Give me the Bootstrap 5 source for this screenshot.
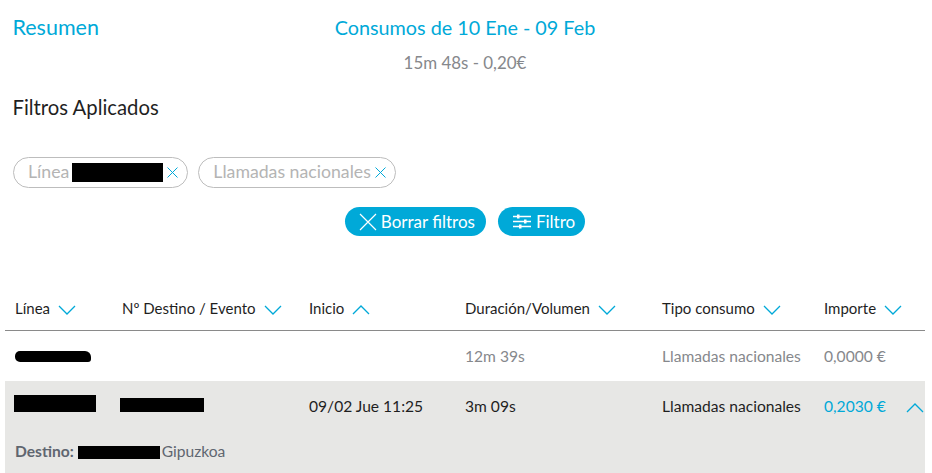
<!DOCTYPE html>
<html lang="es">
<head>
    <meta charset="UTF-8">
    <meta name="viewport" content="width=device-width, initial-scale=1.0">
    <title>Consumos</title>
    <link href="https://cdn.jsdelivr.net/npm/bootstrap@5.3.0/dist/css/bootstrap.min.css" rel="stylesheet">
    <style>
        html, body { height: 473px; overflow: hidden; }
        body { background: #fff; color: #1f1f1f; font-family: Lato, "Noto Sans", sans-serif; font-size: 15px; }
        .page-wrap { padding: 0 7px 0 5px; }
        .top-head { height: 86px; padding: 14px 0 0 7.5px; }
        .resumen-link { flex: 0 0 85.5px; font-size: 21.5px; line-height: 26px; color: #00a9d8; text-decoration: none; }
        .period-box { width: 732px; text-align: center; }
        .period-title { font-size: 19.8px; line-height: 26px; color: #00a9d8; font-weight: 400; }
        .period-sub { font-size: 16.9px; line-height: 20px; margin-top: 13px; color: #86888c; }
        .filters-title { font-size: 20.3px; line-height: 26px; font-weight: 400; margin: 8px 0 0 7.5px; color: #1f1f1f; }
        .chips-row { margin: 37px 0 0 8px; gap: 10px; }
        .filter-chip { height: 31px; border: 1px solid #bdbdbd; border-radius: 16px; color: #b4b4b4; font-size: 17.7px; padding: 0 9px 0 14px; }
        .chip-x { width: 11px; height: 11px; margin-left: 4px; }
        .black-bar { display: inline-block; background: #000; }
        .bar-chip { width: 91px; height: 19px; margin-left: 3px; }
        .actions-row { margin-top: 19px; gap: 12px; }
        .pill-btn { height: 29px; border-radius: 15px; background: #00a9d8; color: #fff; border: 0; font-size: 17px; line-height: 29px; padding: 0 11px 0 14px; display: flex; align-items: center; gap: 4px; }
        .pill-btn:hover { background: #00a9d8; color: #fff; }
        .btn-last { padding: 0 10px 0 15px; gap: 5px; }
        .data-table { table-layout: fixed; width: 920px; margin: 51px 0 0; --bs-table-bg: transparent; }
        .data-table th, .data-table td { padding: 0 0 0 10px; border: 0; vertical-align: middle; white-space: nowrap; font-size: 15.6px; }
        .data-table thead th { font-weight: 400; font-size: 15px; height: 43px; border-bottom: 1px solid #8a8a8a; color: #1f1f1f; }
        .sort-icon { width: 18px; height: 10px; margin-left: 8px; }
        .row-muted td { height: 51px; padding-top: 1px; color: #86888c; }
        .row-open td { background: #e7e7e5; }
        .row-main td { height: 51px; color: #1f1f1f; }
        .row-detail td { height: 41px; color: #5f6670; padding-bottom: 1px; }
        .price-link { color: #00a9d8; }
        .smudge { width: 76px; height: 11px; border-radius: 5px 6px 3px 5px; }
        .bar-one { width: 82px; height: 17px; margin-left: -1px; }
        .bar-two { width: 84px; height: 14px; margin-left: -2px; }
        .bar-three { width: 82px; height: 13px; margin: 0 2px 0 0; vertical-align: -2px; }
        .open-icon { margin-left: 20px; }
        .col-a { width: 107px; } .col-b { width: 187px; } .col-c { width: 156px; }
        .col-d { width: 197px; } .col-e { width: 162px; } .col-f { width: 111px; }
    </style>
</head>
<body>
    <div class="page-wrap">
        <!-- Cabecera -->
        <div class="top-head d-flex">
            <a href="#" class="resumen-link">Resumen</a>
            <div class="period-box">
                <div class="period-title">Consumos de 10 Ene - 09 Feb</div>
                <div class="period-sub">15m 48s - 0,20€</div>
            </div>
        </div>

        <!-- Filtros -->
        <h2 class="filters-title">Filtros Aplicados</h2>
        <div class="chips-row d-flex">
            <div class="filter-chip d-flex align-items-center">Línea <span class="black-bar bar-chip"></span>
                <svg class="chip-x" viewBox="0 0 11 11"><path d="M.5.5l10 10M10.5.5l-10 10" stroke="#00a9d8" fill="none"/></svg>
            </div>
            <div class="filter-chip d-flex align-items-center">Llamadas nacionales
                <svg class="chip-x" viewBox="0 0 11 11"><path d="M.5.5l10 10M10.5.5l-10 10" stroke="#00a9d8" fill="none"/></svg>
            </div>
        </div>
        <div class="actions-row d-flex justify-content-center">
            <button class="btn pill-btn"><svg width="18" height="18" viewBox="0 0 18 18"><path d="M1 1l16 16M17 1L1 17" stroke="#fff" stroke-width="1.2" fill="none"/></svg>Borrar filtros</button>
            <button class="btn pill-btn btn-last"><svg width="18" height="15" viewBox="0 0 18 15"><path d="M0 2.500h18M0 7.500h18M0 12.500h18" stroke="#fff" stroke-width="1.6"/><path d="M4 .5h2.500v4H4zM11 5.500h2.500v4H11zM6 10.500h2.500v4H6z" fill="#fff"/></svg>Filtro</button>
        </div>

        <!-- Tabla -->
        <table class="table data-table">
            <colgroup>
                <col class="col-a"><col class="col-b"><col class="col-c"><col class="col-d"><col class="col-e"><col class="col-f">
            </colgroup>
            <thead>
                <tr>
                    <th>Línea<svg class="sort-icon" viewBox="0 0 18 10"><path d="M1 1l8 8 8-8" stroke="#00a9d8" stroke-width="1.3" fill="none"/></svg></th>
                    <th>Nº Destino / Evento<svg class="sort-icon" viewBox="0 0 18 10"><path d="M1 1l8 8 8-8" stroke="#00a9d8" stroke-width="1.3" fill="none"/></svg></th>
                    <th>Inicio<svg class="sort-icon" viewBox="0 0 18 10"><path d="M1 9l8-8 8 8" stroke="#00a9d8" stroke-width="1.3" fill="none"/></svg></th>
                    <th>Duración/Volumen<svg class="sort-icon" viewBox="0 0 18 10"><path d="M1 1l8 8 8-8" stroke="#00a9d8" stroke-width="1.3" fill="none"/></svg></th>
                    <th>Tipo consumo<svg class="sort-icon" viewBox="0 0 18 10"><path d="M1 1l8 8 8-8" stroke="#00a9d8" stroke-width="1.3" fill="none"/></svg></th>
                    <th>Importe<svg class="sort-icon" viewBox="0 0 18 10"><path d="M1 1l8 8 8-8" stroke="#00a9d8" stroke-width="1.3" fill="none"/></svg></th>
                </tr>
            </thead>
            <tbody>
                <tr class="row-muted">
                    <td><span class="black-bar smudge"></span></td>
                    <td></td>
                    <td></td>
                    <td>12m 39s</td>
                    <td>Llamadas nacionales</td>
                    <td>0,0000 €</td>
                </tr>
                <tr class="row-open row-main">
                    <td><span class="black-bar bar-one"></span></td>
                    <td><span class="black-bar bar-two"></span></td>
                    <td>09/02 Jue 11:25</td>
                    <td>3m 09s</td>
                    <td>Llamadas nacionales</td>
                    <td><span class="price-link">0,2030 €</span><svg class="sort-icon open-icon" viewBox="0 0 18 10"><path d="M1 9l8-8 8 8" stroke="#00a9d8" stroke-width="1.3" fill="none"/></svg></td>
                </tr>
                <tr class="row-open row-detail">
                    <td colspan="6"><strong>Destino:</strong> <span class="black-bar bar-three"></span>Gipuzkoa</td>
                </tr>
            </tbody>
        </table>
    </div>
    <script src="https://cdn.jsdelivr.net/npm/bootstrap@5.3.0/dist/js/bootstrap.bundle.min.js"></script>
</body>
</html>
